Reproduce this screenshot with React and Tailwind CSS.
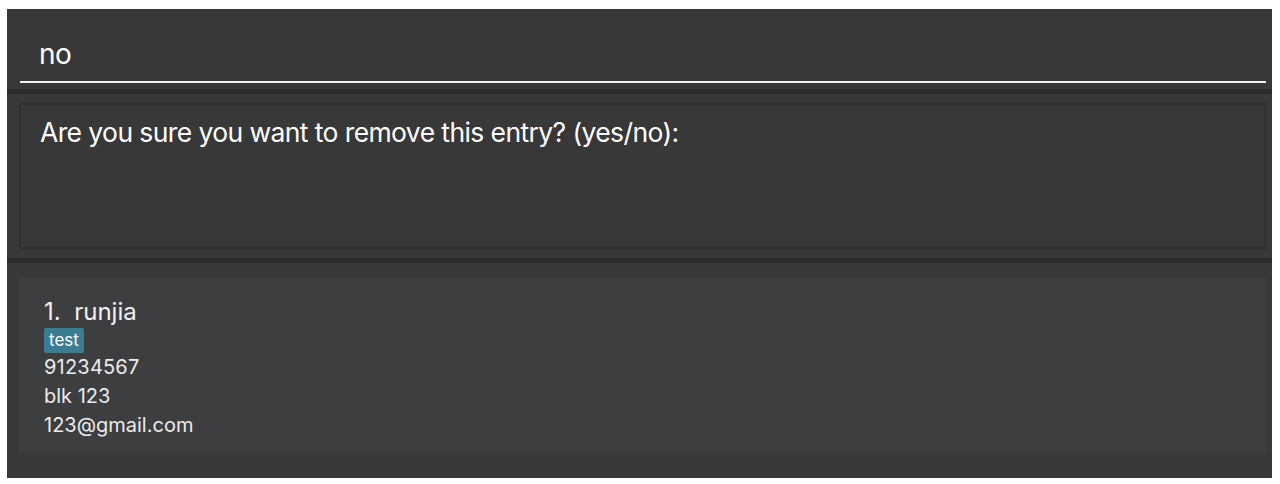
export default function App() {
  return (
    <div className="w-[1280px] h-[484px] bg-white pl-[7px] pt-[9px]" style={{ fontFamily: "Inter, 'Noto Sans', sans-serif" }}>
      <div className="w-[1265px] h-[469px] bg-[#383838] flex flex-col text-white">
        {/* command box */}
        <div className="h-[79px] pl-[13px] pr-[6px] pb-[5px] flex flex-col justify-end">
          <div className="border-b-2 border-[#f2f2f2] pl-[19px] pb-[11px]">
            <span className="text-[28px] leading-[32px] tracking-[-0.6px]">no</span>
          </div>
        </div>
        <div className="h-[5px] bg-[#2c2c2c] mt-[1px]" />
        {/* result display */}
        <div className="h-[164px] pl-[12px] pr-[6px] pt-[9px] pb-[9px]">
          <div className="h-full border-2 border-[#2f2f2f] pl-[19px] pt-[12px]">
            <p className="text-[26.5px] leading-[30px] tracking-[-0.6px]">Are you sure you want to remove this entry? (yes/no):</p>
          </div>
        </div>
        <div className="h-[5px] bg-[#2c2c2c]" />
        {/* person list */}
        <div className="flex-1 pl-[12px] pr-[6px] pt-[15px]">
          <div className="h-[175px] bg-[#3c3e3f] pl-[25px] pt-[20px] flex flex-col items-start">
            <div className="text-[24px] leading-[28px] text-[#f0f0f0] whitespace-pre">1.  runjia</div>
            <span className="mt-[2px] bg-[#3a7d92] rounded-[2px] px-[5px] text-[17px] leading-[25px] text-white">test</span>
            <div className="text-[20px] leading-[29px] tracking-[0.2px] text-[#ececec]">91234567</div>
            <div className="text-[20px] leading-[29px] text-[#ececec]">blk 123</div>
            <div className="text-[20px] leading-[29px] text-[#ececec]">123@gmail.com</div>
          </div>
        </div>
      </div>
    </div>
  );
}
